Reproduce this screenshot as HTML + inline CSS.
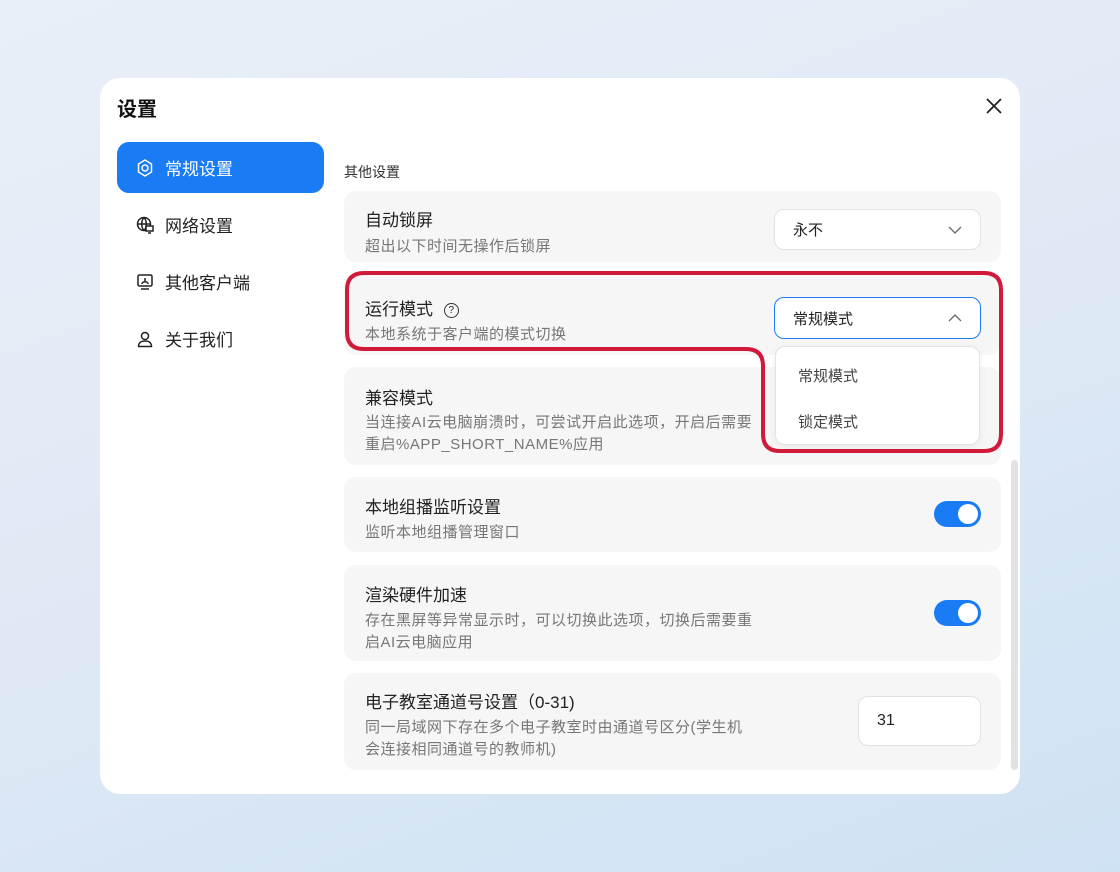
<!DOCTYPE html><html><head><meta charset="utf-8"><style>
*{box-sizing:border-box;margin:0;padding:0}
body{width:1120px;height:872px;overflow:hidden;background:linear-gradient(160deg,#e9eff8 0%,#dfe9f5 50%,#cfe2f3 100%);font-family:"Liberation Sans","Noto Sans CJK SC",sans-serif;position:relative;color:#222}
.dlg{position:absolute;left:100px;top:78px;width:920px;height:716px;background:#fff;border-radius:20px}
.abs{position:absolute}
.title{left:117px;top:93px;font-size:20px;font-weight:bold;color:#111}
.nav{left:117px;width:207px;height:51px;border-radius:12px;display:flex;align-items:center;padding-left:18px;font-size:17px;color:#222}
.nav svg{margin-right:10px}
.card{left:344px;width:657px;background:#f6f6f7;border-radius:12px}
.h{font-size:17px;color:#222;position:absolute;left:21px}
.d{font-size:15px;color:#777;position:absolute;left:21px;line-height:22px;white-space:nowrap;letter-spacing:0.5px}
.sel{background:#fff;border:1px solid #e2e2e6;border-radius:10px;position:absolute;font-size:15px;display:flex;align-items:center;padding-left:18px}
.tog{position:absolute;width:47px;height:26px;border-radius:13px;background:#1a7cf5}
.tog::after{content:"";position:absolute;right:3px;top:3px;width:20px;height:20px;border-radius:50%;background:#fff}
</style></head><body>
<div class="dlg"></div>
<div class="abs title">设置</div>
<svg class="abs" style="left:985px;top:97px" width="18" height="18" viewBox="0 0 18 18"><path d="M2 2L16 16M16 2L2 16" stroke="#222" stroke-width="1.8"/></svg>
<div class="abs nav" style="top:142px;background:#1a7cf5;color:#fff"><svg width="20" height="20" viewBox="0 0 20 20" fill="none" stroke="#fff" stroke-width="1.5"><path d="M10 2l6.5 4v8L10 18l-6.5-4V6z"/><circle cx="10" cy="10" r="3"/></svg>常规设置</div>
<div class="abs nav" style="top:199px"><svg width="20" height="20" viewBox="0 0 20 20" fill="none" stroke="#222" stroke-width="1.5"><circle cx="9" cy="9" r="6.5"/><path d="M2.5 9h13M9 2.5c-3 3-3 10 0 13M9 2.5c3 3 3 10 0 13"/><rect x="11" y="11" width="7" height="5" fill="#fff"/><path d="M13 18h3"/></svg>网络设置</div>
<div class="abs nav" style="top:256px"><svg width="20" height="20" viewBox="0 0 20 20" fill="none" stroke="#222" stroke-width="1.5"><rect x="3" y="3" width="14" height="11" rx="1.5"/><path d="M6 17h8M7 12c0-3 6-3 6 0M10 6v3"/></svg>其他客户端</div>
<div class="abs nav" style="top:313px"><svg width="20" height="20" viewBox="0 0 20 20" fill="none" stroke="#222" stroke-width="1.5"><circle cx="10" cy="7" r="3.5"/><path d="M3.5 17.5c0-4 3-5.5 6.5-5.5s6.5 1.5 6.5 5.5z"/></svg>关于我们</div>

<div class="abs" style="left:344px;top:162px;font-size:14px;color:#333">其他设置</div>

<div class="abs card" style="top:191px;height:71px">
<div class="h" style="top:15px">自动锁屏</div><div class="d" style="top:45px">超出以下时间无操作后锁屏</div>
<div class="sel" style="left:430px;top:18px;width:207px;height:41px">永不<svg style="position:absolute;right:18px;top:16px" width="14" height="8" viewBox="0 0 14 8"><path d="M1 1l6 6 6-6" fill="none" stroke="#666" stroke-width="1.3"/></svg></div></div>

<div class="abs card" style="top:275px;height:80px">
<div class="h" style="top:20px">运行模式 <span style="display:inline-block;width:15px;height:15px;border:1.4px solid #333;border-radius:50%;font-size:10px;text-align:center;line-height:13px;margin-left:6px;vertical-align:2px">?</span></div><div class="d" style="top:49px">本地系统于客户端的模式切换</div></div>

<div class="abs card" style="top:367px;height:98px">
<div class="h" style="top:17px">兼容模式</div><div class="d" style="top:45px">当连接AI云电脑崩溃时，可尝试开启此选项，开启后需要<br>重启%APP_SHORT_NAME%应用</div></div>

<div class="abs card" style="top:477px;height:75px">
<div class="h" style="top:16px">本地组播监听设置</div><div class="d" style="top:45px">监听本地组播管理窗口</div>
<div class="tog" style="left:590px;top:24px"></div></div>

<div class="abs card" style="top:565px;height:96px">
<div class="h" style="top:16px">渲染硬件加速</div><div class="d" style="top:45px">存在黑屏等异常显示时，可以切换此选项，切换后需要重<br>启AI云电脑应用</div>
<div class="tog" style="left:590px;top:35px"></div></div>

<div class="abs card" style="top:673px;height:97px">
<div class="h" style="top:15px">电子教室通道号设置（0-31)</div><div class="d" style="top:44px">同一局域网下存在多个电子教室时由通道号区分(学生机<br>会连接相同通道号的教师机)</div>
<div class="sel" style="left:514px;top:23px;width:123px;height:50px;font-size:16px">31</div></div>

<div class="abs" style="left:1011px;top:460px;width:7px;height:310px;background:#e2e2e4;border-radius:4px"></div>

<div class="sel" style="left:774px;top:297px;width:207px;height:42px;border:1.5px solid #1a7cf5">常规模式<svg style="position:absolute;right:18px;top:16px" width="14" height="8" viewBox="0 0 14 8"><path d="M1 7l6-6 6 6" fill="none" stroke="#666" stroke-width="1.3"/></svg></div>
<div class="abs" style="left:775px;top:346px;width:205px;height:99px;background:#fff;border:1px solid #e2e4ea;border-radius:10px;box-shadow:0 2px 8px rgba(0,0,0,.06);font-size:15px;color:#444">
<div class="abs" style="left:22px;top:18px">常规模式</div><div class="abs" style="left:22px;top:64px">锁定模式</div></div>

<svg class="abs" style="left:0;top:0" width="1120" height="872"><path d="M364 273H984Q1001 273 1001 290V434Q1001 451 984 451H780Q763 451 763 434V366Q763 349 746 349H364Q347 349 347 332V290Q347 273 364 273Z" fill="none" stroke="#d11a3a" stroke-width="4"/></svg>
</body></html>
